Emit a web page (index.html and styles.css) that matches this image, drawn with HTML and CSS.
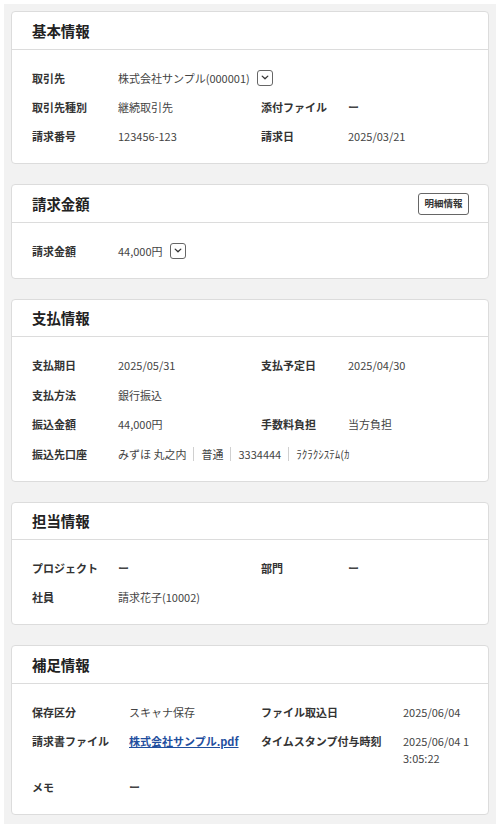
FILE: index.html
```html
<!DOCTYPE html>
<html lang="ja">
<head>
<meta charset="utf-8">
<title>請求書詳細</title>
<link rel="stylesheet" href="styles.css">
</head>
<body>
<div class="page">
  <section class="card">
    <header class="card-head"><h2 class="card-title">基本情報</h2></header>
    <div class="card-body grid cols-a">
      <div class="lbl l1">取引先</div>
      <div class="val span3 withbtn">株式会社サンプル(000001)<span class="toggle"><svg width="8" height="5" viewBox="0 0 8 5"><path d="M1.2 1.1L4 3.8 6.8 1.1" fill="none" stroke="#333" stroke-width="1.3" stroke-linecap="round" stroke-linejoin="round"/></svg></span></div>
      <div class="lbl l1">取引先種別</div>
      <div class="val">継続取引先</div>
      <div class="lbl">添付ファイル</div>
      <div class="val dash">ー</div>
      <div class="lbl l1">請求番号</div>
      <div class="val">123456-123</div>
      <div class="lbl">請求日</div>
      <div class="val">2025/03/21</div>
    </div>
  </section>

  <section class="card">
    <header class="card-head"><h2 class="card-title">請求金額</h2><button class="btn">明細情報</button></header>
    <div class="card-body grid cols-a">
      <div class="lbl l1">請求金額</div>
      <div class="val span3 withbtn">44,000円<span class="toggle"><svg width="8" height="5" viewBox="0 0 8 5"><path d="M1.2 1.1L4 3.8 6.8 1.1" fill="none" stroke="#333" stroke-width="1.3" stroke-linecap="round" stroke-linejoin="round"/></svg></span></div>
    </div>
  </section>

  <section class="card">
    <header class="card-head"><h2 class="card-title">支払情報</h2></header>
    <div class="card-body grid cols-a gap-wide">
      <div class="lbl l1">支払期日</div>
      <div class="val">2025/05/31</div>
      <div class="lbl">支払予定日</div>
      <div class="val">2025/04/30</div>
      <div class="lbl l1">支払方法</div>
      <div class="val">銀行振込</div>
      <div class="lbl l1">振込金額</div>
      <div class="val">44,000円</div>
      <div class="lbl">手数料負担</div>
      <div class="val">当方負担</div>
      <div class="lbl l1">振込先口座</div>
      <div class="val span3 acct"><span class="seg">みずほ 丸之内</span><span class="seg">普通</span><span class="seg">3334444</span><span class="seg">ﾗｸﾗｸｼｽﾃﾑ(ｶ</span></div>
    </div>
  </section>

  <section class="card">
    <header class="card-head"><h2 class="card-title">担当情報</h2></header>
    <div class="card-body grid cols-a">
      <div class="lbl l1">プロジェクト</div>
      <div class="val dash">ー</div>
      <div class="lbl">部門</div>
      <div class="val dash">ー</div>
      <div class="lbl l1">社員</div>
      <div class="val">請求花子(10002)</div>
    </div>
  </section>

  <section class="card">
    <header class="card-head"><h2 class="card-title">補足情報</h2></header>
    <div class="card-body grid cols-b">
      <div class="lbl l1">保存区分</div>
      <div class="val">スキャナ保存</div>
      <div class="lbl">ファイル取込日</div>
      <div class="val">2025/06/04</div>
      <div class="lbl l1">請求書ファイル</div>
      <div class="val"><a class="link" href="#">株式会社サンプル.pdf</a></div>
      <div class="lbl">タイムスタンプ付与時刻</div>
      <div class="val brk">2025/06/04 13:05:22</div>
      <div class="lbl l1">メモ</div>
      <div class="val dash">ー</div>
    </div>
  </section>
</div>
</body>
</html>
```

FILE: styles.css
```css
* { box-sizing: border-box; }
html, body { background: #ffffff; }
body {
  margin: 4px;
  font-family: "Noto Sans CJK JP", "Noto Sans", sans-serif;
  color: #333;
}
.page {
  width: 492px;
  background: #f2f2f2;
  padding: 7px 7px 9px 7px;
  display: flex;
  flex-direction: column;
  gap: 20px;
}
.card {
  background: #fff;
  border: 1px solid #dcdcdc;
  border-radius: 4px;
}
.card-head {
  height: 37.5px;
  border-bottom: 1px solid #dcdcdc;
  padding: 1px 19px 0 20px;
  display: flex;
  align-items: center;
  justify-content: space-between;
}
.card-title {
  margin: 0;
  font-size: 14.4px;
  font-weight: 700;
  color: #222;
  line-height: 20px;
}
.btn {
  font-family: inherit;
  font-size: 9.5px;
  font-weight: 700;
  color: #333;
  background: #fff;
  border: 1px solid #666;
  border-radius: 3px;
  height: 22px;
  width: 51px;
  padding: 0;
  line-height: 1;
}
.card-body {
  padding: 20px 17px 18.5px 20px;
}
.grid {
  display: grid;
  row-gap: 12.8px;
  font-size: 11px;
  line-height: 16.5px;
  align-items: start;
}
.gap-wide { row-gap: 13.2px; padding-bottom: 18px; }
.cols-a { grid-template-columns: 86px 143px 87px 1fr; }
.cols-b { grid-template-columns: 97px 132px 142px 1fr; }
.lbl {
  font-weight: 700;
  color: #333;
  white-space: nowrap;
}
.l1 { grid-column: 1; }
.val {
  color: #444;
  min-width: 0;
}
.dash { font-weight: 700; color: #444; }
.span3 { grid-column: 2 / span 3; }
.withbtn {
  display: flex;
  align-items: center;
  height: 16.5px;
}
.toggle {
  flex: none;
  display: flex;
  align-items: center;
  justify-content: center;
  width: 16px;
  height: 16px;
  border: 1px solid #666;
  border-radius: 3px;
  margin-left: 7px;
}
.acct { display: flex; align-items: center; height: 16.5px; }
.seg {
  padding: 0 7px;
  border-left: 1px solid #d0d0d0;
  line-height: 14px;
}
.seg:first-child { padding-left: 0; border-left: none; }
.link {
  color: #1f4e9e;
  font-weight: 700;
  text-decoration: underline;
}
.brk { word-break: break-all; }
```
